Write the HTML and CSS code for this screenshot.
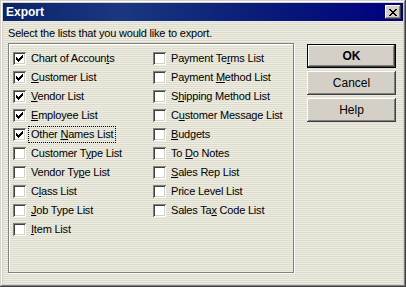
FILE: index.html
```html
<!DOCTYPE html>
<html lang="en">

<head>
  <meta charset="UTF-8">
  <title>Export</title>
  <link rel="stylesheet" href="styles.css">
</head>

<body>
  <div class="window">
    <div class="titlebar">
      <span class="title">Export</span>
      <button class="close" type="button" aria-label="Close">
        <svg width="8" height="7" viewBox="0 0 8 7" shape-rendering="crispEdges">
          <path d="M0 0h2v1h-2zM6 0h2v1h-2zM1 1h2v1h-2zM5 1h2v1h-2zM2 2h4v1h-4zM3 3h2v1h-2zM2 4h4v1h-4zM1 5h2v1h-2zM5 5h2v1h-2zM0 6h2v1h-2zM6 6h2v1h-2z" fill="#000"/>
        </svg>
      </button>
    </div>

    <div class="content">
      <div class="main">
        <p class="prompt">Select the lists that you would like to export.</p>
        <div class="group">
          <ul class="lists">
            <li class="item checked"><span>Chart of Accoun<u>t</u>s</span></li>
            <li class="item"><span>Payment Te<u>r</u>ms List</span></li>
            <li class="item checked"><span><u>C</u>ustomer List</span></li>
            <li class="item"><span>Payment <u>M</u>ethod List</span></li>
            <li class="item checked"><span><u>V</u>endor List</span></li>
            <li class="item"><span>S<u>h</u>ipping Method List</span></li>
            <li class="item checked"><span><u>E</u>mployee List</span></li>
            <li class="item"><span>C<u>u</u>stomer Message List</span></li>
            <li class="item checked"><span class="focus">Other <u>N</u>ames List</span></li>
            <li class="item"><span><u>B</u>udgets</span></li>
            <li class="item"><span>Customer T<u>y</u>pe List</span></li>
            <li class="item"><span>To <u>D</u>o Notes</span></li>
            <li class="item"><span>Vendor Ty<u>p</u>e List</span></li>
            <li class="item"><span><u>S</u>ales Rep List</span></li>
            <li class="item"><span>C<u>l</u>ass List</span></li>
            <li class="item"><span>Price Level List</span></li>
            <li class="item"><span><u>J</u>ob Type List</span></li>
            <li class="item"><span>Sales Ta<u>x</u> Code List</span></li>
            <li class="item"><span><u>I</u>tem List</span></li>
          </ul>
        </div>
      </div>

      <div class="actions">
        <button class="btn default" type="button">OK</button>
        <button class="btn" type="button">Cancel</button>
        <button class="btn" type="button">Help</button>
      </div>
    </div>
  </div>
</body>

</html>
```

FILE: styles.css
```css
* {
  box-sizing: border-box;
  margin: 0;
  padding: 0;
}

html,
body {
  width: 406px;
  height: 287px;
  overflow: hidden;
  font-family: "Liberation Sans", Arial, sans-serif;
  font-size: 11px;
  letter-spacing: -0.2px;
  color: #000;
}

/* Classic raised window frame */
.window {
  width: 406px;
  height: 287px;
  padding: 3px;
  background: #d4d0c8;
  box-shadow:
    inset -1px -1px #404040,
    inset 1px 1px #d4d0c8,
    inset -2px -2px #808080,
    inset 2px 2px #fff;
  display: flex;
  flex-direction: column;
}

.titlebar {
  height: 18px;
  display: flex;
  align-items: center;
  justify-content: space-between;
  padding: 0 2px 0 3px;
  background: linear-gradient(90deg, #0a246a 0%, #1a3780 30%, #0b1f78 60%, #000080 100%);
}

.title {
  color: #fff;
  font-weight: bold;
  font-size: 12px;
  letter-spacing: 0;
}

.close {
  width: 16px;
  height: 14px;
  border: 0;
  background: #d4d0c8;
  display: flex;
  align-items: center;
  justify-content: center;
  box-shadow:
    inset -1px -1px #404040,
    inset 1px 1px #fff,
    inset -2px -2px #808080;
}

/* striped dialog face */
.content {
  flex: 1;
  display: flex;
  gap: 13px;
  padding: 6px 0 0 5px;
  background: repeating-linear-gradient(180deg, #eeede3 0 1px, #dcdbcc 1px 2px);
}

.main {
  width: 286px;
}

.prompt {
  height: 13px;
  line-height: 13px;
  margin-bottom: 3px;
}

.group {
  height: 230px;
  border: 1px solid #808080;
  box-shadow: 1px 1px #fff, inset 1px 1px #fff;
  padding: 8px 4px;
}

.lists {
  list-style: none;
  display: grid;
  grid-template-columns: 140px 1fr;
  grid-auto-rows: 19px;
}

.item {
  display: flex;
  align-items: flex-start;
  height: 19px;
  line-height: 13px;
  white-space: nowrap;
}

/* sunken 13px check box */
.item::before {
  content: "";
  flex: none;
  width: 13px;
  height: 13px;
  margin-right: 5px;
  background-color: #fff;
  box-shadow:
    inset 1px 1px #808080,
    inset -1px -1px #fff,
    inset 2px 2px #404040,
    inset -2px -2px #d4d0c8;
}

.item.checked::before {
  background-image: url("data:image/svg+xml,%3Csvg xmlns='http://www.w3.org/2000/svg' width='13' height='13' shape-rendering='crispEdges'%3E%3Cpath d='M3 5h1v3h-1zM4 6h1v3h-1zM5 7h1v3h-1zM6 6h1v3h-1zM7 5h1v3h-1zM8 4h1v3h-1zM9 3h1v3h-1z' fill='%23000'/%3E%3C/svg%3E");
}

.item u {
  text-decoration: underline;
  text-underline-offset: 1px;
}

.focus {
  outline: 1px dotted #000;
  outline-offset: 1px;
  padding: 0 1px;
  margin-left: -1px;
}

.actions {
  padding-top: 17px;
  display: flex;
  flex-direction: column;
  gap: 3px;
}

.btn {
  width: 89px;
  height: 24px;
  border: 0;
  background: #d4d0c8;
  font-family: "Liberation Sans", Arial, sans-serif;
  font-size: 12px;
  color: #000;
  box-shadow:
    inset -1px -1px #404040,
    inset 1px 1px #fff,
    inset -2px -2px #808080;
}

.btn.default {
  font-weight: bold;
  box-shadow:
    inset 0 0 0 1px #000,
    inset -2px -2px #404040,
    inset 2px 2px #fff,
    inset -3px -3px #808080;
}
```
